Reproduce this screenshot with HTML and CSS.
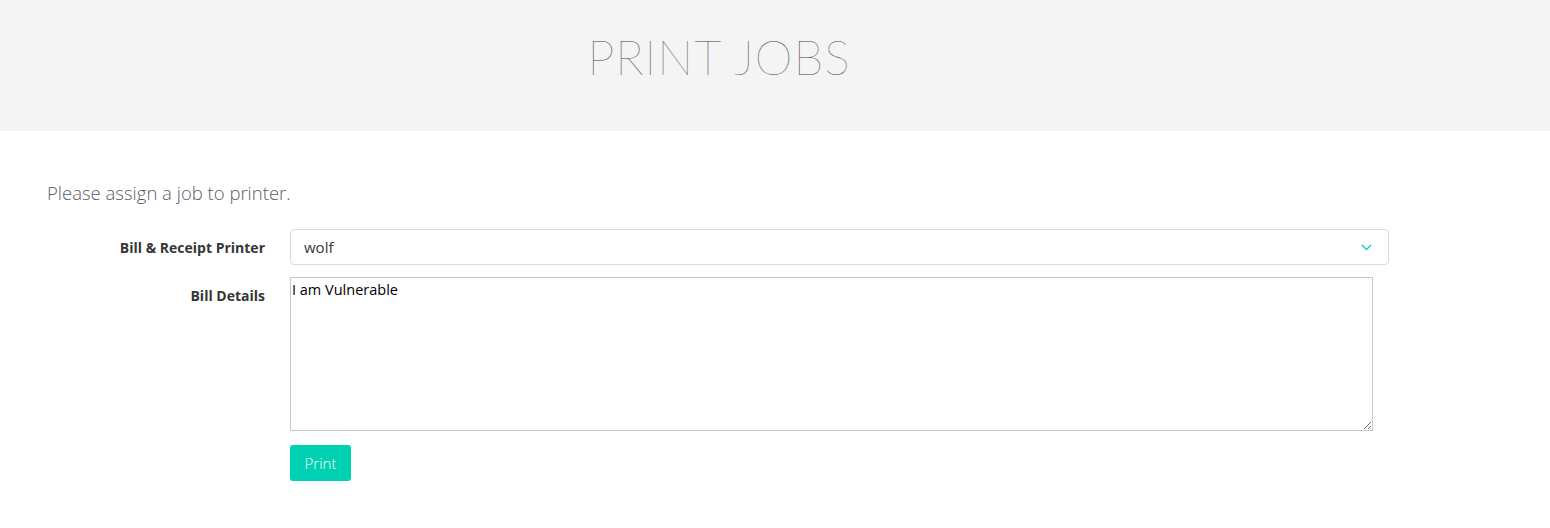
FILE: index.html
```html
<!DOCTYPE html>
<html>
<head>
<meta charset="utf-8">
<title>Print Jobs</title>
<link rel="stylesheet" href="styles.css">
</head>
<body>
<header class="hero">
  <h1 class="hero-title">PRINT JOBS</h1>
</header>
<main class="content">
  <p class="intro">Please assign a job to printer.</p>
  <form class="form">
    <div class="row row-center">
      <label class="label">Bill &amp; Receipt Printer</label>
      <div class="select">
        <span class="select-value">wolf</span>
        <svg class="chevron" width="11" height="7" viewBox="0 0 11 7"><path d="M1 1 L5.5 5.5 L10 1" fill="none" stroke="#00d1b2" stroke-width="1.3"/></svg>
      </div>
    </div>
    <div class="row">
      <label class="label label-top">Bill Details</label>
      <textarea class="textarea">I am Vulnerable</textarea>
    </div>
    <div class="row">
      <span></span>
      <div><button type="button" class="button">Print</button></div>
    </div>
  </form>
</main>
</body>
</html>
```
FILE: styles.css
```css
html, body {
  margin: 0;
  padding: 0;
  background: #fff;
  font-family: "Open Sans", "Liberation Sans", sans-serif;
}
.hero {
  background: #f4f4f4;
  height: 131px;
  box-sizing: border-box;
  padding-top: 29px;
  padding-right: 112px;
  text-align: center;
}
.hero-title {
  margin: 0;
  font-family: "Lato", sans-serif;
  font-weight: 100;
  font-size: 48px;
  line-height: 56px;
  letter-spacing: 1px;
  color: #3f3f3f;
}
.content {
  padding: 0 47px;
}
.intro {
  margin: 0;
  padding-top: 49px;
  font-size: 18.5px;
  line-height: 26px;
  font-weight: 300;
  color: #5b5b6b;
}
.form {
  margin-top: 23px;
  display: flex;
  flex-direction: column;
  gap: 12px;
}
.row {
  display: grid;
  grid-template-columns: 218px 1099px;
  column-gap: 25px;
  align-items: start;
}
.row-center {
  align-items: center;
}
.label {
  text-align: right;
  font-weight: 700;
  font-size: 14px;
  color: #363636;
}
.label-top {
  padding-top: 9px;
}
.select {
  height: 36px;
  box-sizing: border-box;
  border: 1px solid #dbdbdb;
  border-radius: 4px;
  display: flex;
  align-items: center;
  justify-content: space-between;
  padding: 0 16px 0 13px;
  font-size: 15px;
  color: #363636;
}
.chevron {
  display: block;
}
.textarea {
  width: 1083px;
  height: 154px;
  box-sizing: border-box;
  margin: 0;
  border: 1px solid #c9c8c0;
  padding: 2px 1px;
  font-family: "Open Sans", sans-serif;
  font-size: 14.5px;
  color: #000;
  resize: both;
}
.button {
  height: 36px;
  width: 61px;
  border: none;
  border-radius: 3px;
  background: #00d1b2;
  color: #fff;
  font-family: "Open Sans", sans-serif;
  font-weight: 300;
  font-size: 15px;
  padding: 0;
  margin-top: 2px;
}
```
